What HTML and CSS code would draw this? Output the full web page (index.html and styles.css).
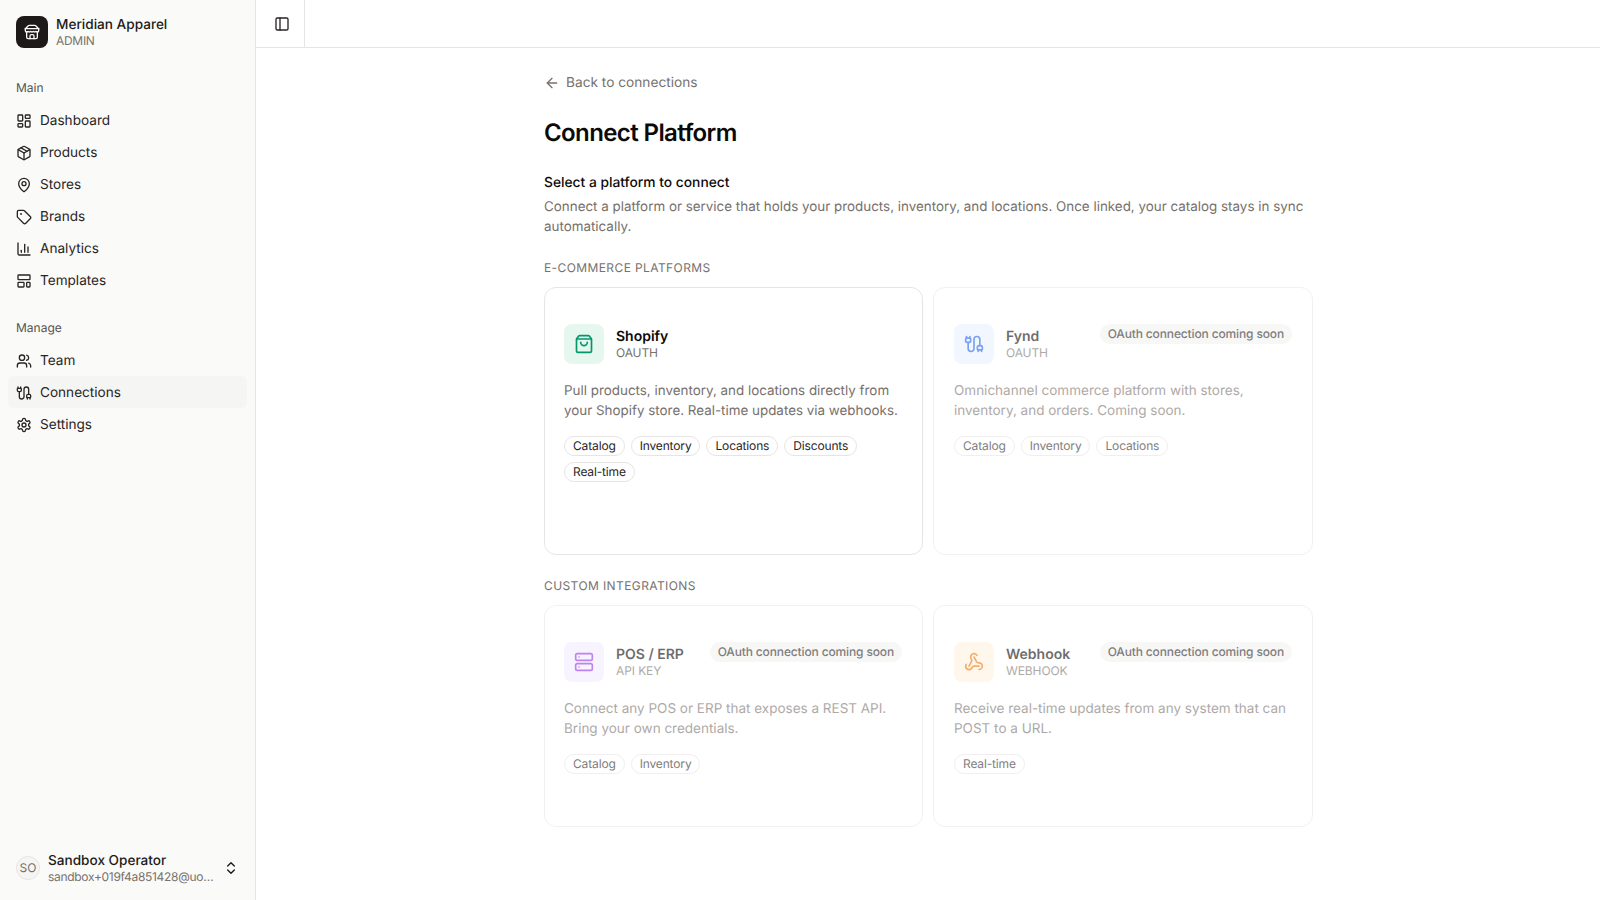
FILE: index.html
```html
<!DOCTYPE html>
<html lang="en">
  <head>
    <meta charset="UTF-8" />
    <meta name="viewport" content="width=device-width, initial-scale=1.0" />
    <title>Connect Platform</title>
    <link rel="stylesheet" href="styles.css">
  </head>
  <body>
    <div class="app">
      <aside class="sidebar">
        <div class="brand">
          <div class="brand-logo">
            <svg class="icon" viewBox="0 0 24 24"><path d="m2 7 4.41-4.41A2 2 0 0 1 7.83 2h8.34a2 2 0 0 1 1.42.59L22 7"/><path d="M4 12v8a2 2 0 0 0 2 2h12a2 2 0 0 0 2-2v-8"/><path d="M15 22v-4a2 2 0 0 0-2-2h-2a2 2 0 0 0-2 2v4"/><path d="M2 7h20"/><path d="M22 7v3a2 2 0 0 1-2 2a2.7 2.7 0 0 1-1.59-.63.7.7 0 0 0-.82 0A2.7 2.7 0 0 1 16 12a2.7 2.7 0 0 1-1.59-.63.7.7 0 0 0-.82 0A2.7 2.7 0 0 1 12 12a2.7 2.7 0 0 1-1.59-.63.7.7 0 0 0-.82 0A2.7 2.7 0 0 1 8 12a2.7 2.7 0 0 1-1.59-.63.7.7 0 0 0-.82 0A2.7 2.7 0 0 1 4 12a2 2 0 0 1-2-2V7"/></svg>
          </div>
          <div class="brand-text">
            <div class="brand-name">Meridian Apparel</div>
            <div class="brand-role">ADMIN</div>
          </div>
        </div>

        <nav class="nav">
          <div class="nav-group">
            <div class="nav-label">Main</div>
            <a class="nav-item">
              <svg class="icon" viewBox="0 0 24 24"><rect x="3" y="3" width="7" height="9" rx="1"/><rect x="14" y="3" width="7" height="5" rx="1"/><rect x="14" y="12" width="7" height="9" rx="1"/><rect x="3" y="16" width="7" height="5" rx="1"/></svg>
              Dashboard
            </a>
            <a class="nav-item">
              <svg class="icon" viewBox="0 0 24 24"><path d="M11 21.73a2 2 0 0 0 2 0l7-4A2 2 0 0 0 21 16V8a2 2 0 0 0-1-1.73l-7-4a2 2 0 0 0-2 0l-7 4A2 2 0 0 0 3 8v8a2 2 0 0 0 1 1.73z"/><path d="M12 22V12"/><path d="m3.3 7 8.7 5 8.7-5"/><path d="m7.5 4.27 9 5.15"/></svg>
              Products
            </a>
            <a class="nav-item">
              <svg class="icon" viewBox="0 0 24 24"><path d="M20 10c0 4.993-5.539 10.193-7.399 11.799a1 1 0 0 1-1.202 0C9.539 20.193 4 14.993 4 10a8 8 0 0 1 16 0"/><circle cx="12" cy="10" r="3"/></svg>
              Stores
            </a>
            <a class="nav-item">
              <svg class="icon" viewBox="0 0 24 24"><path d="M12.586 2.586A2 2 0 0 0 11.172 2H4a2 2 0 0 0-2 2v7.172a2 2 0 0 0 .586 1.414l8.704 8.704a2.426 2.426 0 0 0 3.42 0l6.58-6.58a2.426 2.426 0 0 0 0-3.42z"/><circle cx="7.5" cy="7.5" r=".5" fill="currentColor"/></svg>
              Brands
            </a>
            <a class="nav-item">
              <svg class="icon" viewBox="0 0 24 24"><path d="M3 3v16a2 2 0 0 0 2 2h16"/><path d="M18 17V9"/><path d="M13 17V5"/><path d="M8 17v-3"/></svg>
              Analytics
            </a>
            <a class="nav-item">
              <svg class="icon" viewBox="0 0 24 24"><rect x="3" y="3" width="18" height="7" rx="1"/><rect x="3" y="14" width="9" height="7" rx="1"/><rect x="16" y="14" width="5" height="7" rx="1"/></svg>
              Templates
            </a>
          </div>
          <div class="nav-group">
            <div class="nav-label">Manage</div>
            <a class="nav-item">
              <svg class="icon" viewBox="0 0 24 24"><path d="M16 21v-2a4 4 0 0 0-4-4H6a4 4 0 0 0-4 4v2"/><path d="M16 3.128a4 4 0 0 1 0 7.744"/><path d="M22 21v-2a4 4 0 0 0-3-3.87"/><circle cx="9" cy="7" r="4"/></svg>
              Team
            </a>
            <a class="nav-item active">
              <svg class="icon" viewBox="0 0 24 24"><path d="M17 19a1 1 0 0 1-1-1v-2a2 2 0 0 1 2-2h2a2 2 0 0 1 2 2v2a1 1 0 0 1-1 1z"/><path d="M17 21v-2"/><path d="M19 14V6.5a1 1 0 0 0-7 0v11a1 1 0 0 1-7 0V10"/><path d="M21 21v-2"/><path d="M3 5V3"/><path d="M4 10a2 2 0 0 1-2-2V6a1 1 0 0 1 1-1h4a1 1 0 0 1 1 1v2a2 2 0 0 1-2 2z"/><path d="M7 5V3"/></svg>
              Connections
            </a>
            <a class="nav-item">
              <svg class="icon" viewBox="0 0 24 24"><path d="M12.22 2h-.44a2 2 0 0 0-2 2v.18a2 2 0 0 1-1 1.73l-.43.25a2 2 0 0 1-2 0l-.15-.08a2 2 0 0 0-2.73.73l-.22.38a2 2 0 0 0 .73 2.73l.15.1a2 2 0 0 1 1 1.72v.51a2 2 0 0 1-1 1.74l-.15.09a2 2 0 0 0-.73 2.73l.22.38a2 2 0 0 0 2.73.73l.15-.08a2 2 0 0 1 2 0l.43.25a2 2 0 0 1 1 1.73V20a2 2 0 0 0 2 2h.44a2 2 0 0 0 2-2v-.18a2 2 0 0 1 1-1.73l.43-.25a2 2 0 0 1 2 0l.15.08a2 2 0 0 0 2.73-.73l.22-.39a2 2 0 0 0-.73-2.73l-.15-.08a2 2 0 0 1-1-1.74v-.5a2 2 0 0 1 1-1.74l.15-.09a2 2 0 0 0 .73-2.73l-.22-.38a2 2 0 0 0-2.73-.73l-.15.08a2 2 0 0 1-2 0l-.43-.25a2 2 0 0 1-1-1.73V4a2 2 0 0 0-2-2z"/><circle cx="12" cy="12" r="3"/></svg>
              Settings
            </a>
          </div>
        </nav>

        <div class="user">
          <div class="avatar">SO</div>
          <div class="user-text">
            <div class="user-name">Sandbox Operator</div>
            <div class="user-email">sandbox+019f4a851428@uo…</div>
          </div>
          <svg class="icon" viewBox="0 0 24 24"><path d="m7 15 5 5 5-5"/><path d="m7 9 5-5 5 5"/></svg>
        </div>
      </aside>

      <div class="content">
        <header class="topbar">
          <button class="toggle">
            <svg class="icon" viewBox="0 0 24 24"><rect x="3" y="3" width="18" height="18" rx="2"/><path d="M9 3v18"/></svg>
          </button>
        </header>

        <main class="page">
          <a class="back">
            <svg class="icon" viewBox="0 0 24 24"><path d="m12 19-7-7 7-7"/><path d="M19 12H5"/></svg>
            Back to connections
          </a>
          <h1 class="page-title">Connect Platform</h1>
          <h2 class="intro-title">Select a platform to connect</h2>
          <p class="intro-text">Connect a platform or service that holds your products, inventory, and locations. Once linked, your catalog stays in sync automatically.</p>

          <h3 class="section-label">E-commerce platforms</h3>
          <div class="card-grid tall">
            <div class="card">
              <div class="card-head">
                <div class="card-icon green">
                  <svg class="icon" viewBox="0 0 24 24"><path d="M16 10a4 4 0 0 1-8 0"/><path d="M3.103 6.034h17.794"/><path d="M3.4 5.467a2 2 0 0 0-.4 1.2V20a2 2 0 0 0 2 2h14a2 2 0 0 0 2-2V6.667a2 2 0 0 0-.4-1.2l-2-2.667A2 2 0 0 0 17 2H7a2 2 0 0 0-1.6.8z"/></svg>
                </div>
                <div class="card-title">
                  <div class="card-name">Shopify</div>
                  <div class="card-type">OAUTH</div>
                </div>
              </div>
              <p class="card-desc">Pull products, inventory, and locations directly from your Shopify store. Real-time updates via webhooks.</p>
              <div class="tags">
                <span class="tag">Catalog</span>
                <span class="tag">Inventory</span>
                <span class="tag">Locations</span>
                <span class="tag">Discounts</span>
                <span class="tag">Real-time</span>
              </div>
            </div>

            <div class="card disabled">
              <div class="card-head">
                <div class="card-icon blue">
                  <svg class="icon" viewBox="0 0 24 24"><path d="M17 19a1 1 0 0 1-1-1v-2a2 2 0 0 1 2-2h2a2 2 0 0 1 2 2v2a1 1 0 0 1-1 1z"/><path d="M17 21v-2"/><path d="M19 14V6.5a1 1 0 0 0-7 0v11a1 1 0 0 1-7 0V10"/><path d="M21 21v-2"/><path d="M3 5V3"/><path d="M4 10a2 2 0 0 1-2-2V6a1 1 0 0 1 1-1h4a1 1 0 0 1 1 1v2a2 2 0 0 1-2 2z"/><path d="M7 5V3"/></svg>
                </div>
                <div class="card-title">
                  <div class="card-name">Fynd</div>
                  <div class="card-type">OAUTH</div>
                </div>
                <span class="soon">OAuth connection coming soon</span>
              </div>
              <p class="card-desc">Omnichannel commerce platform with stores, inventory, and orders. Coming soon.</p>
              <div class="tags">
                <span class="tag">Catalog</span>
                <span class="tag">Inventory</span>
                <span class="tag">Locations</span>
              </div>
            </div>
          </div>

          <h3 class="section-label">Custom integrations</h3>
          <div class="card-grid">
            <div class="card disabled">
              <div class="card-head">
                <div class="card-icon purple">
                  <svg class="icon" viewBox="0 0 24 24"><rect x="2" y="2" width="20" height="8" rx="2"/><rect x="2" y="14" width="20" height="8" rx="2"/><line x1="6" y1="6" x2="6.01" y2="6"/><line x1="6" y1="18" x2="6.01" y2="18"/></svg>
                </div>
                <div class="card-title">
                  <div class="card-name">POS / ERP</div>
                  <div class="card-type">API KEY</div>
                </div>
                <span class="soon">OAuth connection coming soon</span>
              </div>
              <p class="card-desc">Connect any POS or ERP that exposes a REST API. Bring your own credentials.</p>
              <div class="tags">
                <span class="tag">Catalog</span>
                <span class="tag">Inventory</span>
              </div>
            </div>

            <div class="card disabled">
              <div class="card-head">
                <div class="card-icon orange">
                  <svg class="icon" viewBox="0 0 24 24"><path d="M18 16.98h-5.99c-1.1 0-1.95.94-2.48 1.9A4 4 0 0 1 2 17c.01-.7.2-1.4.57-2"/><path d="m6 17 3.13-5.78c.53-.97.1-2.18-.5-3.1a4 4 0 1 1 6.89-4.06"/><path d="m12 6 3.13 5.73C15.66 12.7 16.9 13 18 13a4 4 0 0 1 0 8"/></svg>
                </div>
                <div class="card-title">
                  <div class="card-name">Webhook</div>
                  <div class="card-type">WEBHOOK</div>
                </div>
                <span class="soon">OAuth connection coming soon</span>
              </div>
              <p class="card-desc">Receive real-time updates from any system that can POST to a URL.</p>
              <div class="tags">
                <span class="tag">Real-time</span>
              </div>
            </div>
          </div>
        </main>
      </div>
    </div>
  </body>
</html>
```

FILE: styles.css
```css
* {
  box-sizing: border-box;
}
body {
  margin: 0;
  font-family: Inter, "Liberation Sans", sans-serif;
  font-size: 13.6px;
  line-height: 20px;
  color: #0c0a09;
  background-color: #fff;
  text-rendering: geometricPrecision;
}
.icon {
  width: 16px;
  height: 16px;
  flex-shrink: 0;
  fill: none;
  stroke: currentColor;
  stroke-width: 2;
  stroke-linecap: round;
  stroke-linejoin: round;
}
.app {
  display: flex;
  height: 900px;
  overflow: hidden;
}

/* sidebar */
.sidebar {
  width: 256px;
  flex-shrink: 0;
  display: flex;
  flex-direction: column;
  background-color: #fafaf9;
  border-right: 1px solid #e7e5e4;
}
.brand {
  display: flex;
  align-items: flex-start;
  gap: 8px;
  padding: 16px 16px 0;
}
.brand-logo {
  width: 32px;
  height: 32px;
  display: flex;
  align-items: center;
  justify-content: center;
  background-color: #1c1917;
  color: #fafaf9;
  border-radius: 8px;
}
.brand-text {
  padding-top: 1px;
}
.brand-name {
  font-weight: 500;
  line-height: 16px;
  color: #1c1917;
}
.brand-role {
  font-size: 12px;
  line-height: 16px;
  letter-spacing: -0.3px;
  color: #78716c;
}
.nav {
  flex: 1;
  padding: 23px 8px 0;
}
.nav-group {
  margin-bottom: 16px;
}
.nav-label {
  padding: 0 8px;
  font-size: 12px;
  line-height: 32px;
  color: #57534e;
}
.nav-item {
  display: flex;
  align-items: center;
  gap: 8px;
  height: 32px;
  padding: 1px 8px 0;
  border-radius: 6px;
  color: #292524;
}
.nav-item.active {
  background-color: #f5f5f4;
}
.user {
  display: flex;
  align-items: center;
  gap: 8px;
  padding: 0 16px 16px;
  color: #1c1917;
}
.avatar {
  width: 24px;
  height: 24px;
  flex-shrink: 0;
  display: flex;
  align-items: center;
  justify-content: center;
  background-color: #f5f5f4;
  border: 1px solid #e7e5e4;
  border-radius: 50%;
  font-size: 12px;
  color: #78716c;
}
.user-text {
  flex: 1;
  min-width: 0;
  margin: 1px 0 -1px;
}
.user-name {
  font-weight: 500;
  line-height: 16px;
}
.user-email {
  font-size: 12px;
  line-height: 16px;
  letter-spacing: -0.3px;
  color: #78716c;
  white-space: nowrap;
}

/* main area */
.content {
  flex: 1;
  min-width: 0;
}
.topbar {
  height: 48px;
  border-bottom: 1px solid #e7e5e4;
}
.toggle {
  width: 49px;
  height: 47px;
  display: flex;
  align-items: center;
  justify-content: center;
  padding: 0 0 0 4px;
  background: none;
  border: none;
  border-right: 1px solid #e7e5e4;
  color: #292524;
}
.page {
  width: 768px;
  margin: 0 auto;
  padding-top: 25px;
}
.back {
  display: flex;
  align-items: center;
  gap: 6px;
  height: 20px;
  font-size: 13.7px;
  color: #78716c;
}
.page-title {
  margin: 24px 0 0;
  font-size: 24px;
  line-height: 32px;
  font-weight: 600;
  letter-spacing: -0.6px;
}
.intro-title {
  margin: 24px 0 0;
  font-size: 13.8px;
  line-height: 20px;
  font-weight: 500;
}
.intro-text {
  margin: 4px 0 0;
  font-size: 13.4px;
  color: #78716c;
}
.section-label {
  margin: 23px 0 11px;
  font-size: 12px;
  line-height: 16px;
  font-weight: 400;
  letter-spacing: 0.4px;
  text-transform: uppercase;
  color: #78716c;
}
.card-grid {
  display: grid;
  grid-template-columns: 379px 380px;
  gap: 10px;
}
.card-grid.tall .card {
  min-height: 268px;
}
.card {
  padding: 36px 20px 52px 19px;
  background-color: #fff;
  border: 1px solid #e7e5e4;
  border-radius: 12px;
}
.card:nth-child(2) {
  padding-left: 20px;
}
.card.disabled {
  border-color: #f2f1f0;
}
.card.disabled > * {
  opacity: 0.6;
}
.card-head {
  display: flex;
  align-items: flex-start;
  gap: 12px;
}
.card-icon {
  width: 40px;
  height: 40px;
  flex-shrink: 0;
  display: flex;
  align-items: center;
  justify-content: center;
  border-radius: 8px;
}
.card-icon .icon {
  width: 20px;
  height: 20px;
}
.card-icon.green {
  background-color: #e6f7f0;
  color: #059669;
}
.card-icon.blue {
  background-color: #e9f1ff;
  color: #2563eb;
}
.card-icon.purple {
  background-color: #f3edff;
  color: #9333ea;
}
.card-icon.orange {
  background-color: #fff1e0;
  color: #ea7a0c;
}
.card-title {
  flex: 1;
  min-width: 0;
  padding-top: 5px;
}
.card-name {
  font-size: 14px;
  font-weight: 600;
  line-height: 16px;
}
.card-type {
  font-size: 12px;
  line-height: 16px;
  letter-spacing: -0.1px;
  color: #78716c;
}
.soon {
  padding: 0 8px;
  background-color: #f3f2f1;
  border-radius: 10px;
  font-size: 12px;
  font-weight: 500;
  line-height: 20px;
  letter-spacing: -0.14px;
  color: #292524;
  white-space: nowrap;
}
.card-desc {
  margin: 17px 0 0;
  font-size: 13.4px;
  color: #78716c;
}
.card.disabled .card-desc {
  font-size: 13.5px;
}
.tags {
  display: flex;
  flex-wrap: wrap;
  gap: 6px;
  margin-top: 15px;
}
.tag {
  padding: 0 8px;
  height: 20px;
  border: 1px solid #e7e5e4;
  border-radius: 10px;
  font-size: 12px;
  line-height: 18px;
  letter-spacing: -0.15px;
  color: #292524;
}
```
